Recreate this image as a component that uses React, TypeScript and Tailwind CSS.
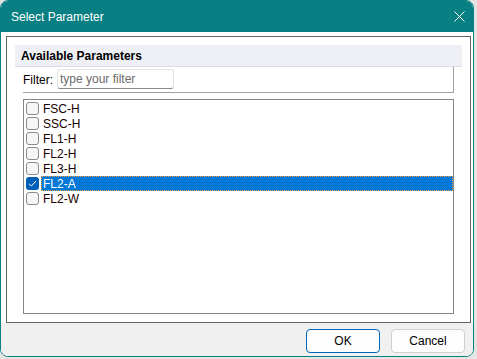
import React from "react";

const items = ["FSC-H", "SSC-H", "FL1-H", "FL2-H", "FL3-H", "FL2-A", "FL2-W"];

export default function App() {
  return (
    <div
      className="w-[477px] h-[359px] bg-[#e4e4e4] text-[12px] text-black"
      style={{ fontFamily: '"Segoe UI", "Liberation Sans", Arial, sans-serif' }}
    >
      <div className="w-[474px] h-[357px] flex flex-col border border-[#0b7f84] rounded-[8px] overflow-hidden bg-white">
        <div className="h-[31px] shrink-0 bg-[#077f83] flex items-center justify-between pl-[10px] pr-[7px] text-white">
          <span className="text-[12px] leading-none">Select Parameter</span>
          <svg width="11" height="11" viewBox="0 0 11 11" className="mr-[1px]">
            <path d="M0.5 0.5 L10.5 10.5 M10.5 0.5 L0.5 10.5" stroke="white" strokeWidth="1" fill="none" />
          </svg>
        </div>
        <div className="h-[291px] shrink-0 bg-white pt-[4px] pl-[5px] pr-[2px]">
          <div className="h-[287px] border border-[#646464] p-[8px] flex flex-col">
            <div className="h-[22px] shrink-0 bg-[#eff0f5] border-b border-[#dcdde3] flex items-center pl-[6px] font-bold text-[12px]">
              Available Parameters
            </div>
            <div className="px-[8px] flex flex-col">
              <div className="h-[26px] border-r border-b border-[#a0a0a0] flex items-start pt-[2px]">
                <span className="mt-[2px] text-[12px]">Filter:</span>
                <div className="ml-[4px] w-[117px] h-[20px] border border-[#e3e3e3] border-b-[#8a8a8a] rounded-[3px] bg-white flex items-center pl-[2px] text-[#6b6b6b] text-[12px]">
                  type your filter
                </div>
              </div>
              <div className="mt-[6px] h-[215px] border border-[#828790] bg-white pt-[1px] flex flex-col">
                {items.map((it) => {
                  const sel = it === "FL2-A";
                  return (
                    <div key={it} className="h-[15px] flex items-center pl-[2px] pr-0">
                      {sel ? (
                        <div className="w-[13px] h-[13px] rounded-[3px] bg-[#005fb8] flex items-center justify-center shrink-0">
                          <svg width="9" height="9" viewBox="0 0 9 9">
                            <path d="M1 4.8 L3.4 7 L8 2" stroke="white" strokeWidth="1" fill="none" />
                          </svg>
                        </div>
                      ) : (
                        <div className="w-[13px] h-[13px] rounded-[3px] border border-[#8a8a8a] bg-[#f6f6f6] shrink-0" />
                      )}
                      <div
                        className={
                          sel
                            ? "ml-[2px] flex-1 h-[15px] bg-[#0078d7] border border-dotted border-[#f0a040] text-white flex items-center pl-[1px] leading-none"
                            : "ml-[2px] flex-1 h-[15px] flex items-center pl-[2px] leading-none text-[#1a0000]"
                        }
                      >
                        {it}
                      </div>
                    </div>
                  );
                })}
              </div>
            </div>
          </div>
        </div>
        <div className="flex-1 bg-[#f0f0f0] flex justify-end items-start pt-[6px] pr-[8px] gap-[11px]">
          <button className="w-[74px] h-[24px] rounded-[4px] border border-[#0067c0] bg-[#fdfdfd] text-[12px] flex items-center justify-center">
            OK
          </button>
          <button className="w-[74px] h-[24px] rounded-[4px] border border-[#d0d0d0] bg-[#fdfdfd] text-[12px] flex items-center justify-center">
            Cancel
          </button>
        </div>
      </div>
    </div>
  );
}
